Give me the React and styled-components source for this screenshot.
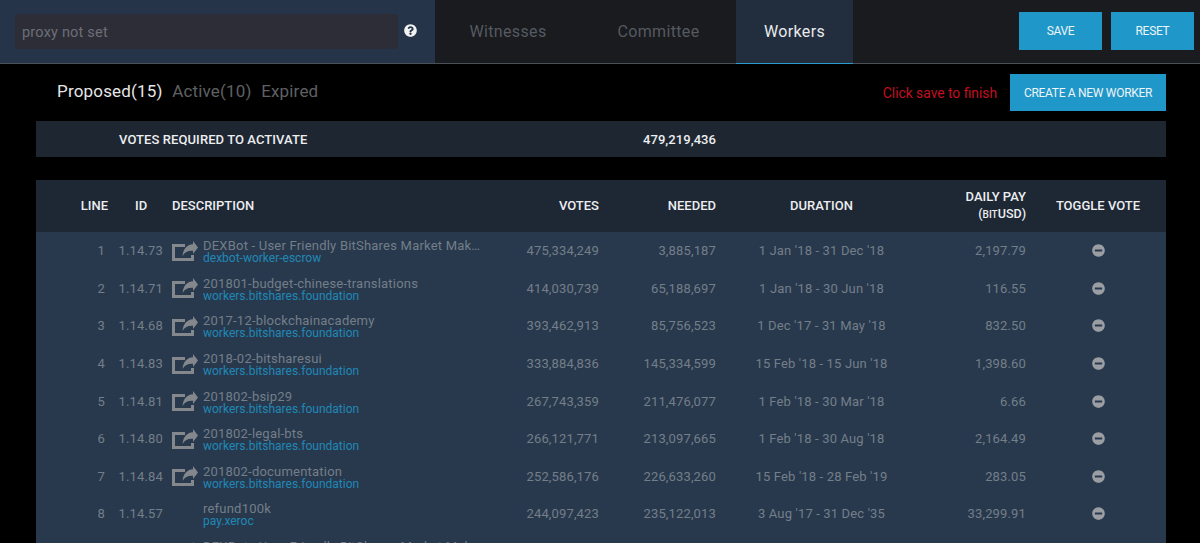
import React from 'react'
import styled, { createGlobalStyle } from 'styled-components'
import { FaQuestionCircle, FaMinusCircle } from 'react-icons/fa'

const workers = [
  { id: '1.14.73', name: 'DEXBot - User Friendly BitShares Market Maker', url: 'dexbot-worker-escrow', votes: '475,334,249', needed: '3,885,187', duration: "1 Jan '18 - 31 Dec '18", pay: '2,197.79', link: true },
  { id: '1.14.71', name: '201801-budget-chinese-translations', url: 'workers.bitshares.foundation', votes: '414,030,739', needed: '65,188,697', duration: "1 Jan '18 - 30 Jun '18", pay: '116.55', link: true },
  { id: '1.14.68', name: '2017-12-blockchainacademy', url: 'workers.bitshares.foundation', votes: '393,462,913', needed: '85,756,523', duration: "1 Dec '17 - 31 May '18", pay: '832.50', link: true },
  { id: '1.14.83', name: '2018-02-bitsharesui', url: 'workers.bitshares.foundation', votes: '333,884,836', needed: '145,334,599', duration: "15 Feb '18 - 15 Jun '18", pay: '1,398.60', link: true },
  { id: '1.14.81', name: '201802-bsip29', url: 'workers.bitshares.foundation', votes: '267,743,359', needed: '211,476,077', duration: "1 Feb '18 - 30 Mar '18", pay: '6.66', link: true },
  { id: '1.14.80', name: '201802-legal-bts', url: 'workers.bitshares.foundation', votes: '266,121,771', needed: '213,097,665', duration: "1 Feb '18 - 30 Aug '18", pay: '2,164.49', link: true },
  { id: '1.14.84', name: '201802-documentation', url: 'workers.bitshares.foundation', votes: '252,586,176', needed: '226,633,260', duration: "15 Feb '18 - 28 Feb '19", pay: '283.05', link: true },
  { id: '1.14.57', name: 'refund100k', url: 'pay.xeroc', votes: '244,097,423', needed: '235,122,013', duration: "3 Aug '17 - 31 Dec '35", pay: '33,299.91', link: false },
  { id: '1.14.74', name: 'DEXBot - User Friendly BitShares Market Maker', url: 'dexbot-worker-escrow', votes: '', needed: '', duration: '', pay: '', link: true, hideToggle: true },
]

function ShareIcon() {
  return (
    <ShareSvg viewBox="0 0 26 20" aria-hidden="true">
      <path d="M13 4.500H1.500V18.500H20.500V14" fill="none" stroke="currentColor" strokeWidth="3" />
      <path d="M21 0L26 6.500L21 13V9.800C16 9.500 13 11 10.500 15C11 8.500 14.500 3.600 21 3.200Z" fill="currentColor" />
    </ShareSvg>
  )
}

export default function App() {
  return (
    <Page>
      <GlobalStyle />
      <Header>
        <ProxyPanel>
          <ProxyInput>proxy not set</ProxyInput>
          <HelpIcon />
        </ProxyPanel>
        <Tabs>
          <Tab $width="146px">Witnesses</Tab>
          <Tab $width="155px">Committee</Tab>
          <Tab $width="117px" $active>Workers</Tab>
        </Tabs>
        <HeaderActions>
          <HeaderButton>Save</HeaderButton>
          <HeaderButton>Reset</HeaderButton>
        </HeaderActions>
      </Header>
      <Content>
        <SubBar>
          <SubTabs>
            <SubTab $active>Proposed(15)</SubTab>
            <SubTab>Active(10)</SubTab>
            <SubTab>Expired</SubTab>
          </SubTabs>
          <SaveHint>Click save to finish</SaveHint>
          <CreateButton>Create a new worker</CreateButton>
        </SubBar>
        <RequiredBar>
          <RequiredLabel>Votes required to activate</RequiredLabel>
          <RequiredValue>479,219,436</RequiredValue>
        </RequiredBar>
        <Table>
          <HeadRow>
            <LineHead>Line</LineHead>
            <IdHead>ID</IdHead>
            <DescHead>Description</DescHead>
            <HeadCell $align="right">Votes</HeadCell>
            <HeadCell $align="right">Needed</HeadCell>
            <HeadCell $align="center">Duration</HeadCell>
            <HeadCell $align="right">
              Daily Pay
              <Unit>(<small>bit</small>USD)</Unit>
            </HeadCell>
            <ToggleHead>Toggle vote</ToggleHead>
          </HeadRow>
          {workers.map((w, i) => (
            <Row key={w.id}>
              <LineCell>{i + 1}</LineCell>
              <Cell $align="right">{w.id}</Cell>
              <DescCell>
                <IconSlot>{w.link && <ShareIcon />}</IconSlot>
                <DescText>
                  <Title>{w.name}</Title>
                  <Url>{w.url}</Url>
                </DescText>
              </DescCell>
              <Cell $align="right">{w.votes}</Cell>
              <Cell $align="right">{w.needed}</Cell>
              <Cell $align="center">{w.duration}</Cell>
              <Cell $align="right">{w.pay}</Cell>
              <ToggleCell>{!w.hideToggle && <MinusIcon />}</ToggleCell>
            </Row>
          ))}
        </Table>
      </Content>
    </Page>
  )
}

const GlobalStyle = createGlobalStyle`
  html, body {
    margin: 0;
    height: 100%;
    overflow: hidden;
    background: #000;
  }
  * {
    box-sizing: border-box;
  }
`

const Page = styled.div`
  height: 543px;
  overflow: hidden;
  background: #000;
  font-family: Roboto, "Liberation Sans", sans-serif;
`

const Header = styled.header`
  display: flex;
  height: 64px;
  background: #1a1b1f;
  border-bottom: 1px solid #4a5058;
`

const ProxyPanel = styled.div`
  width: 435px;
  display: flex;
  align-items: center;
  padding: 0 18px 0 15px;
  background: #253449;
`

const ProxyInput = styled.div`
  flex: 1;
  height: 35px;
  margin-right: 6px;
  padding-left: 7px;
  line-height: 37px;
  font-size: 14.500px;
  letter-spacing: 0.2px;
  color: #6d6f76;
  background: #2c2d36;
  border-radius: 3px;
`

const HelpIcon = styled(FaQuestionCircle)`
  width: 13px;
  height: 13px;
  margin-bottom: 3px;
  color: #f2f2f2;
`

const Tabs = styled.nav`
  display: flex;
`

const Tab = styled.div`
  width: ${p => p.$width};
  display: flex;
  align-items: center;
  justify-content: center;
  font-size: 16px;
  letter-spacing: 0.35px;
  color: ${p => (p.$active ? '#e8eaec' : '#555a60')};
  background: ${p => (p.$active ? '#222e3d' : 'transparent')};
  border-bottom: ${p => (p.$active ? '1px solid #2a9ad0' : 'none')};
  margin-bottom: ${p => (p.$active ? '-1px' : '0')};
`

const HeaderActions = styled.div`
  display: flex;
  gap: 9px;
  margin-left: auto;
  padding: 12px 6px 0 0;
`

const HeaderButton = styled.div`
  width: 83px;
  height: 38px;
  display: flex;
  align-items: center;
  justify-content: center;
  font-size: 12px;
  letter-spacing: -0.3px;
  text-transform: uppercase;
  color: #eef4f7;
  background: #2097c9;
`

const Content = styled.main`
  padding: 0 34px 0 36px;
`

const SubBar = styled.div`
  height: 57px;
  display: flex;
  align-items: center;
  padding-left: 21px;
`

const SubTabs = styled.div`
  display: flex;
  gap: 9.500px;
  margin: 0 auto 3px 0;
`

const SubTab = styled.div`
  font-size: 17px;
  letter-spacing: 0.18px;
  color: ${p => (p.$active ? '#e6e6e6' : '#5f6063')};
`

const SaveHint = styled.div`
  margin-right: 13px;
  font-size: 13.800px;
  color: #c40f20;
`

const CreateButton = styled.div`
  width: 156px;
  height: 37px;
  display: flex;
  align-items: center;
  justify-content: center;
  font-size: 12px;
  letter-spacing: -0.3px;
  text-transform: uppercase;
  color: #eef4f7;
  background: #2097c9;
`

const RequiredBar = styled.div`
  height: 36px;
  display: flex;
  align-items: center;
  font-size: 13px;
  font-weight: 500;
  color: #eceef0;
  background: #1e2632;
`

const RequiredLabel = styled.div`
  width: 607px;
  padding-left: 83px;
  letter-spacing: 0.08px;
  text-transform: uppercase;
`

const RequiredValue = styled.div`
  width: 73px;
  text-align: right;
  letter-spacing: 0.06px;
`

const Table = styled.section`
  margin-top: 23px;
`

const columns = '73px 54px 336px 100px 117px 211px 99px 140px'

const HeadRow = styled.div`
  height: 52px;
  padding-bottom: 2px;
  display: grid;
  grid-template-columns: ${columns};
  align-items: center;
  font-size: 13px;
  font-weight: 500;
  text-transform: uppercase;
  color: #eceef0;
  background: #1e2734;
`

const HeadCell = styled.div`
  text-align: ${p => p.$align};
  line-height: 17px;
`

const LineHead = styled.div`
  padding-right: 1px;
  text-align: right;
`

const IdHead = styled.div`
  padding-left: 26px;
`

const DescHead = styled.div`
  padding-left: 9px;
`

const ToggleHead = styled.div`
  padding-left: 4px;
  text-align: center;
`

const Unit = styled.div`
  font-size: 12.500px;
  text-transform: none;
  small {
    font-size: 10px;
    text-transform: uppercase;
  }
`

const Row = styled.div`
  height: 37.600px;
  display: grid;
  grid-template-columns: ${columns};
  align-items: center;
  font-size: 13px;
  letter-spacing: 0.15px;
  color: #747e88;
  background: #28394e;
`

const Cell = styled.div`
  text-align: ${p => p.$align};
`

const LineCell = styled.div`
  padding-right: 4px;
  text-align: right;
`

const DescCell = styled.div`
  display: flex;
  align-items: center;
  min-width: 0;
  padding-left: 9px;
`

const IconSlot = styled.div`
  flex: 0 0 31px;
  display: flex;
  align-items: center;
`

const ShareSvg = styled.svg`
  width: 26px;
  height: 20px;
  color: #84878b;
`

const DescText = styled.div`
  width: 279px;
  padding: 2.500px 0 0.500px;
`

const Title = styled.div`
  overflow: hidden;
  white-space: nowrap;
  text-overflow: ellipsis;
  margin-bottom: -3px;
  font-size: 13px;
  letter-spacing: 0.21px;
  line-height: 16px;
`

const Url = styled.div`
  font-size: 12px;
  letter-spacing: 0;
  line-height: 14px;
  color: #2088b5;
`

const ToggleCell = styled.div`
  display: flex;
  justify-content: center;
  padding-left: 4px;
`

const MinusIcon = styled(FaMinusCircle)`
  width: 13px;
  height: 13px;
  color: #9a9ea3;
`
